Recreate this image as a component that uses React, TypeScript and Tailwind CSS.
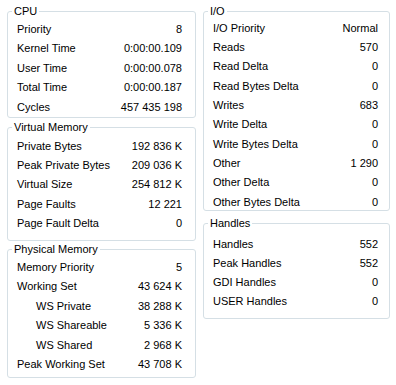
type Row = { label: string; value: string; indent?: boolean }

type Group = {
  title: string
  rows: Row[]
  height: string
  pad: string
  rowH: string
  gapTop: string
}

const cpu: Group = {
  title: "CPU",
  height: "h-[114px]",
  pad: "pt-[1px]",
  rowH: "h-[19.5px]",
  gapTop: "mt-0",
  rows: [
    { label: "Priority", value: "8" },
    { label: "Kernel Time", value: "0:00:00.109" },
    { label: "User Time", value: "0:00:00.078" },
    { label: "Total Time", value: "0:00:00.187" },
    { label: "Cycles", value: "457 435 198" },
  ],
}

const virtualMem: Group = {
  title: "Virtual Memory",
  height: "h-[121px]",
  pad: "pt-[2.5px]",
  rowH: "h-[19.2px]",
  gapTop: "mt-[2px]",
  rows: [
    { label: "Private Bytes", value: "192 836 K" },
    { label: "Peak Private Bytes", value: "209 036 K" },
    { label: "Virtual Size", value: "254 812 K" },
    { label: "Page Faults", value: "12 221" },
    { label: "Page Fault Delta", value: "0" },
  ],
}

const physicalMem: Group = {
  title: "Physical Memory",
  height: "h-[136px]",
  pad: "pt-[1.3px]",
  rowH: "h-[19.4px]",
  gapTop: "mt-[1px]",
  rows: [
    { label: "Memory Priority", value: "5" },
    { label: "Working Set", value: "43 624 K" },
    { label: "WS Private", value: "38 288 K", indent: true },
    { label: "WS Shareable", value: "5 336 K", indent: true },
    { label: "WS Shared", value: "2 968 K", indent: true },
    { label: "Peak Working Set", value: "43 708 K" },
  ],
}

const io: Group = {
  title: "I/O",
  height: "h-[207px]",
  pad: "pt-0",
  rowH: "h-[19.33px]",
  gapTop: "mt-0",
  rows: [
    { label: "I/O Priority", value: "Normal" },
    { label: "Reads", value: "570" },
    { label: "Read Delta", value: "0" },
    { label: "Read Bytes Delta", value: "0" },
    { label: "Writes", value: "683" },
    { label: "Write Delta", value: "0" },
    { label: "Write Bytes Delta", value: "0" },
    { label: "Other", value: "1 290" },
    { label: "Other Delta", value: "0" },
    { label: "Other Bytes Delta", value: "0" },
  ],
}

const handles: Group = {
  title: "Handles",
  height: "h-[103px]",
  pad: "pt-[5px]",
  rowH: "h-[18.8px]",
  gapTop: "mt-[5px]",
  rows: [
    { label: "Handles", value: "552" },
    { label: "Peak Handles", value: "552" },
    { label: "GDI Handles", value: "0" },
    { label: "USER Handles", value: "0" },
  ],
}

function GroupBox({ group, right }: { group: Group; right?: boolean }) {
  return (
    <fieldset
      className={`${group.height} ${group.gapTop} border border-[#d5dfe5] rounded-[3px] px-[4px] pb-0 pt-0 min-w-0`}
    >
      <legend className="px-[2px] leading-[14px] h-[14px]">{group.title}</legend>
      <div className={`${group.pad} flex flex-col ${right ? "pl-[5px] pr-[7px]" : "pl-[5px] pr-[9px]"}`}>
        {group.rows.map(r => (
          <div key={r.label} className={`${group.rowH} flex items-center justify-between`}>
            <span className={r.indent ? "pl-[19px]" : ""}>{r.label}</span>
            <span>{r.value}</span>
          </div>
        ))}
      </div>
    </fieldset>
  )
}

export default function App() {
  return (
    <div
      className="w-[396px] h-[385px] bg-white text-black text-[11px] leading-[14px] flex gap-[7px] pl-[7px] pt-[4px]"
      style={{ fontFamily: '"Liberation Sans", Arial, sans-serif' }}
    >
      {/* Left column */}
      <div className="w-[189px] flex flex-col">
        <GroupBox group={cpu} />
        <GroupBox group={virtualMem} />
        <GroupBox group={physicalMem} />
      </div>

      {/* Right column */}
      <div className="w-[187px] flex flex-col">
        <GroupBox group={io} right />
        <GroupBox group={handles} right />
      </div>
    </div>
  )
}
